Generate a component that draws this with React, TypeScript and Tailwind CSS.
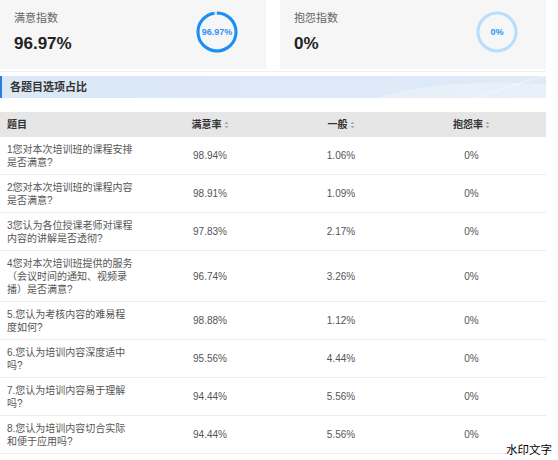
import React from "react";

const rows = [
  { q: "1您对本次培训班的课程安排是否满意?", a: "98.94%", b: "1.06%", c: "0%" },
  { q: "2您对本次培训班的课程内容是否满意?", a: "98.91%", b: "1.09%", c: "0%" },
  { q: "3您认为各位授课老师对课程内容的讲解是否透彻?", a: "97.83%", b: "2.17%", c: "0%" },
  { q: "4您对本次培训班提供的服务（会议时间的通知、视频录播）是否满意?", a: "96.74%", b: "3.26%", c: "0%" },
  { q: "5.您认为考核内容的难易程度如何?", a: "98.88%", b: "1.12%", c: "0%" },
  { q: "6.您认为培训内容深度适中吗?", a: "95.56%", b: "4.44%", c: "0%" },
  { q: "7.您认为培训内容易于理解吗?", a: "94.44%", b: "5.56%", c: "0%" },
  { q: "8.您认为培训内容切合实际和便于应用吗?", a: "94.44%", b: "5.56%", c: "0%" },
];

function Ring({ pct, label, strong }: { pct: number; label: string; strong: boolean }) {
  const r = 19;
  const c = 2 * Math.PI * r;
  return (
    <svg width="42" height="42" viewBox="0 0 42 42" className="block">
      <circle cx="21" cy="21" r={r} fill="none" stroke="#b8defd" strokeWidth="3" />
      {strong && (
        <circle
          cx="21"
          cy="21"
          r={r}
          fill="none"
          stroke="#1a8ff5"
          strokeWidth="3"
          strokeDasharray={`${(c * pct) / 100} ${c}`}
          transform="rotate(-90 21 21)"
        />
      )}
      <text
        x="21"
        y="24.2"
        textAnchor="middle"
        fontSize="9"
        fontWeight="700"
        fill="#2e95f2"
        fontFamily="Liberation Sans, sans-serif"
      >
        {label}
      </text>
    </svg>
  );
}

function Card({ title, value, pct, strong }: { title: string; value: string; pct: number; strong: boolean }) {
  return (
    <div className="w-[266px] h-[69px] bg-[#f6f6f6] flex justify-between pl-[14px] pr-[28px]">
      <div className="flex flex-col pt-[10px]">
        <div className="text-[11px] leading-[16px] text-[#666]">{title}</div>
        <div className="mt-[8px] text-[17px] leading-[20px] font-bold text-[#222]">{value}</div>
      </div>
      <div className="mt-[11px]">
        <Ring pct={pct} label={value} strong={strong} />
      </div>
    </div>
  );
}

function Sort() {
  return (
    <svg width="5" height="8" viewBox="0 0 5 8" className="inline-block ml-[2px] align-[-1px]">
      <path d="M2.5 0.5 L4.5 3 L0.5 3 Z" fill="#aaa" />
      <path d="M2.5 7.5 L4.5 5 L0.5 5 Z" fill="#aaa" />
    </svg>
  );
}

export default function App() {
  return (
    <div
      className="relative w-[558px] h-[460px] bg-white overflow-hidden"
      style={{ fontFamily: '"Liberation Sans", "Noto Sans CJK SC", sans-serif' }}
    >
      <div className="flex gap-[14px]">
        <Card title="满意指数" value="96.97%" pct={96.97} strong />
        <Card title="抱怨指数" value="0%" pct={0} strong={false} />
      </div>
      <div className="w-[546px] mt-[2px] h-px bg-[#eaf2fb]" />
      <div className="relative w-[546px] mt-[4px] h-[22px] border-l-[2px] border-[#2a7de1] bg-gradient-to-r from-[#dbe8f6] to-[#dfeaf7] overflow-hidden flex items-center pl-[8px]">
        <svg className="absolute right-0 top-0" width="170" height="22" viewBox="0 0 170 22">
          <path d="M0 22 C40 10 90 4 170 8 L170 22 Z" fill="#ffffff" fillOpacity="0.28" />
          <path d="M100 22 C130 12 150 4 170 0" stroke="#ffffff" strokeOpacity="0.5" fill="none" />
        </svg>
        <span className="relative text-[11px] font-bold text-[#333] leading-[22px]">各题目选项占比</span>
      </div>
      <table className="mt-[14px] w-[546px] border-collapse table-fixed text-[10px] text-[#555]">
        <colgroup>
          <col className="w-[143px]" />
          <col className="w-[134px]" />
          <col className="w-[128px]" />
          <col className="w-[141px]" />
        </colgroup>
        <thead>
          <tr className="bg-[#e6e6e6] h-[25px]">
            <th className="text-left font-bold text-[#333] pl-[7px]">题目</th>
            <th className="font-bold text-[#333]">
              满意率
              <Sort />
            </th>
            <th className="font-bold text-[#333]">
              一般
              <Sort />
            </th>
            <th className="font-bold text-[#333] pr-[8px]">
              抱怨率
              <Sort />
            </th>
          </tr>
        </thead>
        <tbody>
          {rows.map((r, i) => (
            <tr key={i} className="border-b border-[#ececec]">
              <td className="pl-[7px] pr-[8px] pt-[6px] pb-[5px] leading-[13px] align-middle">{r.q}</td>
              <td className="text-center align-middle">{r.a}</td>
              <td className="text-center align-middle">{r.b}</td>
              <td className="text-center align-middle pr-[8px]">{r.c}</td>
            </tr>
          ))}
        </tbody>
      </table>
      <div
        className="absolute left-[506px] top-[441px] text-[11.5px] leading-[16px] text-black"
        style={{ fontFamily: '"Noto Sans CJK SC", sans-serif' }}
      >
        水印文字
      </div>
    </div>
  );
}
